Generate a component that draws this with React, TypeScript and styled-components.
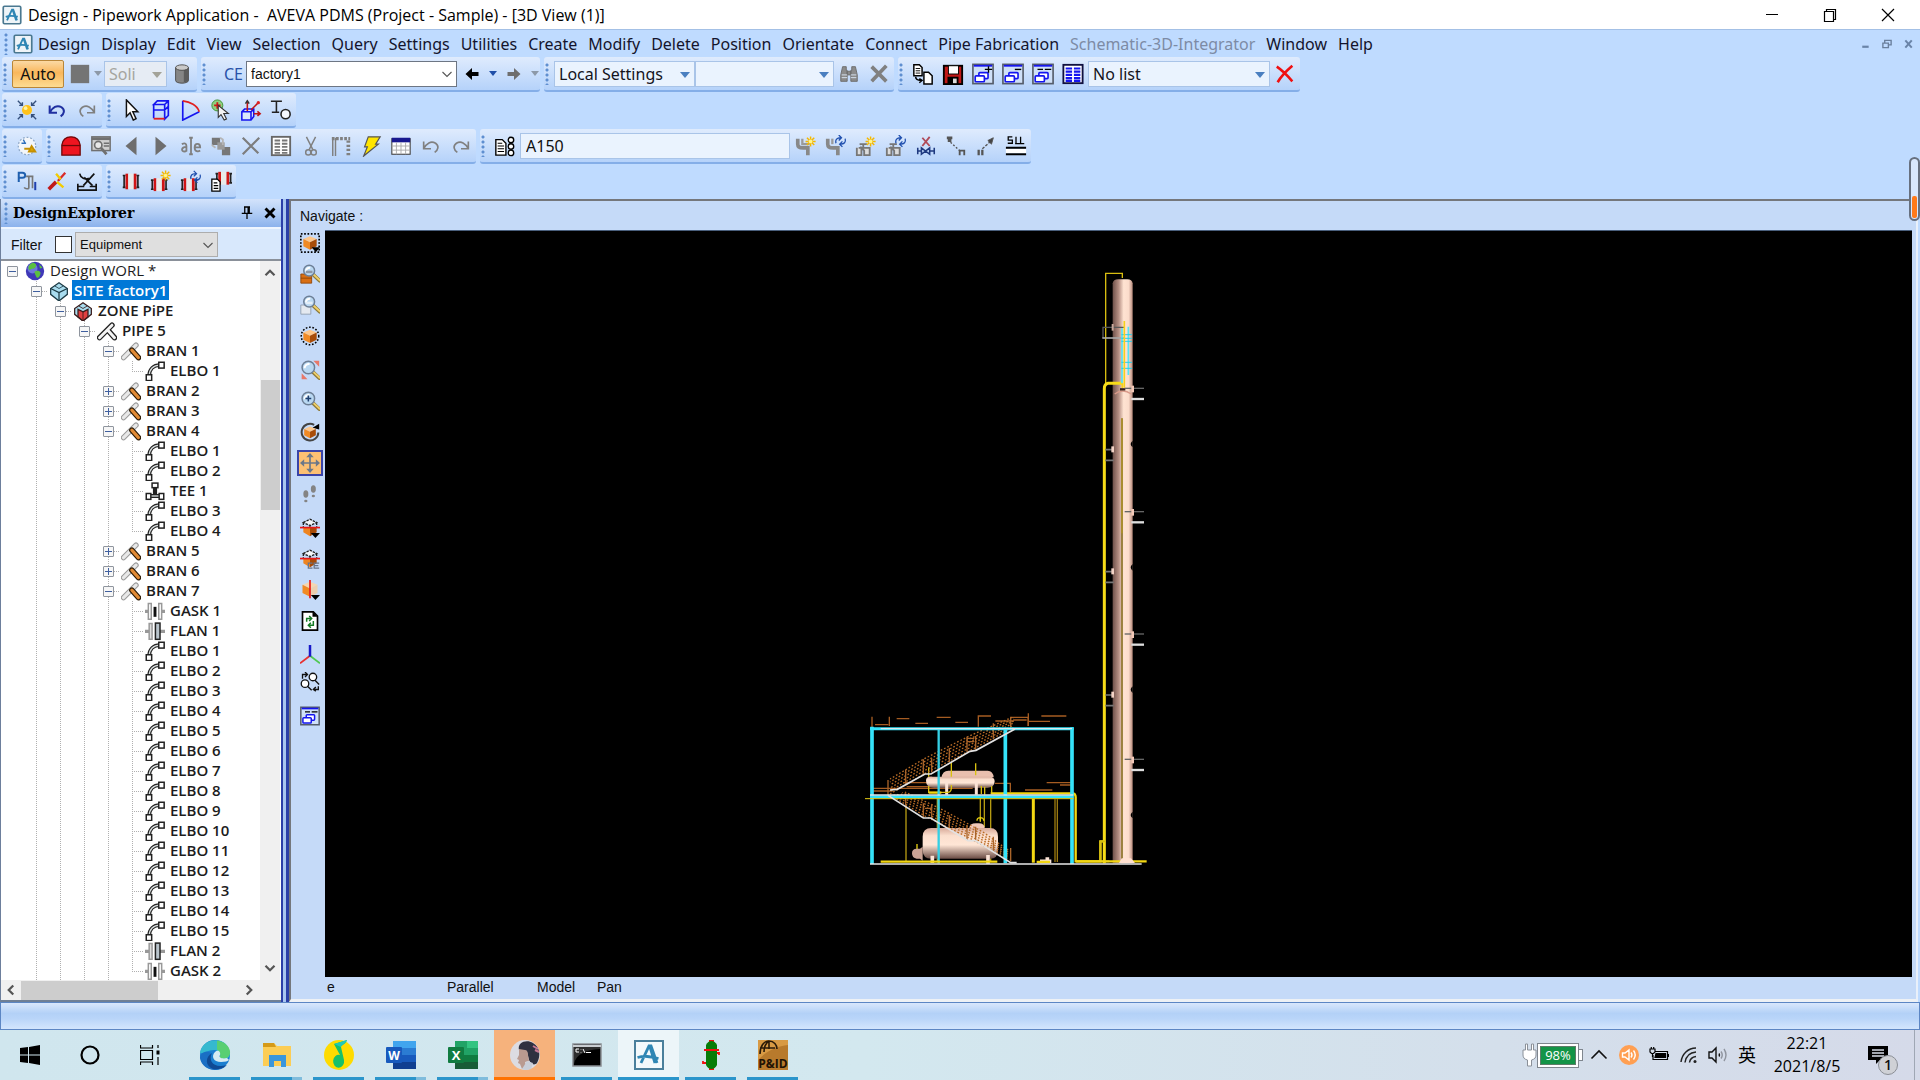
import React from "react";
import styled, { createGlobalStyle } from "styled-components";

const ui = '"Noto Sans", "Open Sans", "Noto Sans CJK SC", sans-serif';
const arial = '"Liberation Sans", Arial, sans-serif';

const GlobalStyle = createGlobalStyle`
  * { box-sizing: border-box; }
  body { margin: 0; background: #bfdbff; font-family: ${ui}; color: #101010; overflow: hidden; }
  button, select, input { font: inherit; color: inherit; margin: 0; }
  button { border: 0; background: none; padding: 0; }
  ul { list-style: none; margin: 0; padding: 0; }
`;

/* ---------- drawings ---------- */

const Svg = styled.svg<{ $size?: number }>`
  width: ${(p) => p.$size ?? 24}px;
  height: ${(p) => p.$size ?? 24}px;
  flex: none;
  display: block;
`;

const Cube = ({ x = 12, y = 12, r = 7, top = "#ffc78a", left = "#f08a24", right = "#a84c08", line = "none" }) => (
  <g stroke={line}>
    <path d={`M${x} ${y - r}l${r} ${r * 0.4}l${-r} ${r * 0.5}l${-r} ${-r * 0.5}z`} fill={top} />
    <path d={`M${x - r} ${y - r * 0.6}l${r} ${r * 0.5}v${r * 1.1}l${-r} ${-r * 0.5}z`} fill={left} />
    <path d={`M${x + r} ${y - r * 0.6}l${-r} ${r * 0.5}v${r * 1.1}l${r} ${-r * 0.5}z`} fill={right} />
  </g>
);

/* Cube whose upper half is cut away and dashed */
const ClippedCube = () => (
  <g>
    <path d="M4 11h8v11l-8 -5z" fill="#ee8420" />
    <path d="M20 11h-8v11l8 -5z" fill="#a84c08" />
    <path d="M4 5.500l8 -4l8 4l-8 3.500zM4 5.500v5M20 5.500v5M12 9v2" fill="#f4f6fa" stroke="#222" strokeWidth="1.600" strokeDasharray="3 1.200" />
    <path d="M0 11.500h24" stroke="#e81818" strokeWidth="2" />
  </g>
);

const Lens = ({ x = 9, y = 9, r = 6 }) => (
  <g>
    <path d={`M${x + r * 0.7} ${y + r * 0.7}l8 7.5`} stroke="#8d7a3a" strokeWidth="4.4" strokeLinecap="round" />
    <path d={`M${x + r * 0.8} ${y + r * 0.7}l7.5 7`} stroke="#efcf6a" strokeWidth="2.2" strokeLinecap="round" />
    <circle cx={x} cy={y} r={r} fill="#b9d8f2" stroke="#6d7f96" strokeWidth="1.8" />
    <path d={`M${x - r * 0.6} ${y + 1}a${r * 0.7} ${r * 0.7} 0 0 1 ${r * 0.8} ${-r * 0.7}`} stroke="#fff" strokeWidth="2.4" fill="none" />
  </g>
);

const Spark = ({ x = 17, y = 7 }) => (
  <g stroke="#f5b800" strokeWidth="1.6">
    <path d={`M${x} ${y - 5.5}v11M${x - 5.5} ${y}h11M${x - 4} ${y - 4}l8 8M${x + 4} ${y - 4}l-8 8`} />
    <circle cx={x} cy={y} r="2" fill="#fff58a" stroke="none" />
  </g>
);

const Cycle = ({ x = 17, y = 6 }) => (
  <g stroke="#1f4fae" strokeWidth="1.4" fill="none">
    <path d={`M${x - 5} ${y + 3}c-1 -4 1 -6 5 -6M${x - 2} ${y - 6}l3 3l-3 3`} />
    <path d={`M${x + 5} ${y - 2}c1 4 -1 6 -5 6M${x + 2} ${y + 7}l-3 -3l3 -3`} />
  </g>
);

const flangePair = (x: number, y: number, h: number) => (
  <g>
    <path d={`M${x} ${y + 2}h3M${x} ${y + h - 2}h3M${x + 1.5} ${y + 2}v${h - 4}`} stroke="#222" strokeWidth="1.8" />
    <rect x={x + 3} y={y} width="3" height={h} fill="#d01515" />
    <rect x={x + 6} y={y} width="6" height={h} fill="#e9e9e9" />
    <rect x={x + 12} y={y} width="3" height={h} fill="#d01515" />
    <path d={`M${x + 15} ${y + 2}h3M${x + 15} ${y + h - 2}h3M${x + 16.5} ${y + 2}v${h - 4}`} stroke="#222" strokeWidth="1.8" />
  </g>
);

const boxWindow = (extra: React.ReactNode) => (
  <g fill="none">
    <rect x="1" y="1.5" width="22" height="21" fill="#cfe0f8" stroke="#555d6b" strokeWidth="1.8" />
    <path d="M2 3h20" stroke="#1515f0" strokeWidth="2" />
    <rect x="7.5" y="10.5" width="10" height="6.5" rx="1" fill="#fff" stroke="#1515f0" strokeWidth="1.8" />
    <rect x="3.5" y="14" width="10" height="6.5" rx="1" fill="#fff" stroke="#1515f0" strokeWidth="1.8" />
    {extra}
  </g>
);

const icons: Record<string, React.ReactNode> = {
  logo: (
    <g>
      <rect x="1.5" y="1.5" width="21" height="21" rx="1.5" fill="#eef4f8" stroke="#4a7890" strokeWidth="2" />
      <path d="M6 18.5L12 5.5h1.5L18 18.5M12.8 6L17 18.5M4.5 14.2c4 -1.5 8 -1.5 14.5 -.2" fill="none" stroke="#2f86b4" strokeWidth="2.2" />
    </g>
  ),
  square: <rect x="2" y="2" width="20" height="20" fill="#747474" />,
  cylinder: (
    <g>
      <path d="M5 5v14c0 4 14 4 14 0V5z" fill="#858585" stroke="#4c4c4c" />
      <path d="M14 7v14c3 -.3 5 -1 5 -2V5z" fill="#5c5c5c" />
      <ellipse cx="12" cy="5" rx="7" ry="3" fill="#c9c9c9" stroke="#4c4c4c" />
    </g>
  ),
  left: <path d="M5.500 12l6.500 -6v4h6.500v4H12v4z" fill="#000" />,
  right: <path d="M18.500 12l-6.500 -6v4H5.500v4H12v4z" fill="#6e6e6e" />,
  binoc: (
    <g fill="#8b8b8b" stroke="#6b6b6b">
      <path d="M5 4h4v4h1v12H3v-7zM15 4h4l2 9v7h-7V8h1zM10 9h4v4h-4z" />
      <path d="M4 13h6M14 13h6M4 16h6M14 16h6" stroke="#dbe7f5" />
    </g>
  ),
  greyX: <path d="M4 4l16 16M20 3L4 20" stroke="#808080" strokeWidth="4" />,
  thinX: <path d="M3 3l17 17M21 3L3 21" stroke="#7d7d7d" strokeWidth="2.4" />,
  redX: <path d="M3 4c6 4 11 9 17 16M20 3C13 9 8 14 4 21" stroke="#f01010" strokeWidth="2.8" fill="none" />,
  copyDocs: (
    <g fill="#fff" stroke="#000" strokeWidth="1.6">
      <path d="M2 2h6l3 3v9H2zM13 10h5l4 4v9h-9z" />
      <path d="M4 6h5M4 8.500h5M4 11h5" strokeWidth="1" />
      <path d="M4 15c0 3 2 4 6 4M8 17l3 2l-3 2.500" fill="none" />
    </g>
  ),
  save: (
    <g>
      <rect x="2" y="3" width="20" height="20" fill="#c01818" stroke="#000" strokeWidth="2" />
      <rect x="7" y="3" width="11" height="9" fill="#fff" stroke="#000" />
      <rect x="6" y="15" width="12" height="8" fill="#000" />
      <rect x="12" y="17" width="4" height="5" fill="#ddd" />
    </g>
  ),
  winPlus: boxWindow(<path d="M14 7h8M18 3.500v7" stroke="#000" strokeWidth="1.5" />),
  winMinus: boxWindow(<path d="M14 7h7" stroke="#000" strokeWidth="1.5" />),
  winDash: boxWindow(<path d="M6 7h6M14 7h7" stroke="#000" strokeWidth="1.5" />),
  listWin: (
    <g>
      <rect x="1.500" y="2" width="21" height="20" fill="#fff" stroke="#101040" strokeWidth="2" />
      <path d="M4 6h7M4 9.500h7M4 13h7M4 16.500h7M4 19.500h7M13 6h7M13 9.500h7M13 13h7M13 16.500h7M13 19.500h7" stroke="#1515f0" strokeWidth="2.400" />
    </g>
  ),
  sun: (
    <g>
      <circle cx="12" cy="12" r="5.500" fill="#ffc21a" />
      <circle cx="10.500" cy="10" r="2" fill="#fff3a0" />
      <path d="M2 2l5 5M7 3.500V7H3.500M22 2l-5 5M17 3.500V7h3.500M2 22l5 -5M3.500 17H7v3.500M22 22l-5 -5M20.500 17H17v3.500" stroke="#35507c" strokeWidth="1.500" fill="none" />
    </g>
  ),
  undo: <path d="M4 7v8h8M4 15c3 -6 8 -9 13 -6c4 3 3 7 -1 10" stroke="#1f2fa0" strokeWidth="2.200" fill="none" />,
  redo: <path d="M20 7v8h-8M20 15c-3 -6 -8 -9 -13 -6c-4 3 -3 7 1 10" stroke="#808080" strokeWidth="1.800" fill="none" />,
  undoGrey: <path d="M4 7v8h8M4 15c3 -6 8 -9 13 -6c4 3 3 7 -1 10" stroke="#808080" strokeWidth="1.800" fill="none" />,
  pointer: <path d="M7 1v18l4 -4l3.500 8l3 -1.500l-3.500 -7.500h5.500z" fill="#fff" stroke="#111" strokeWidth="1.600" />,
  frameBox: (
    <g fill="none" stroke="#1515f0" strokeWidth="1.800">
      <path d="M4 6l4 -4h12v16l-4 4V6zM4 6v15M20 2l-4 4M4 12h12l4 -4M4 6h12" />
      <path d="M4 21.500h12" stroke="#e02020" strokeWidth="2" />
    </g>
  ),
  sector: (
    <g fill="none" strokeWidth="1.800">
      <path d="M3 2v21L21 14" stroke="#1515f0" />
      <path d="M3 2c8 1 16 5 18 12" stroke="#e02020" />
    </g>
  ),
  addPick: (
    <g>
      <circle cx="8" cy="7" r="6" fill="#8fd07f" stroke="#3a8f2e" />
      <path d="M8 3.500v7M4.500 7h7" stroke="#d01515" strokeWidth="2" />
      <path d="M9 7v13l3 -3l3.500 6l2.500 -1.200l-3 -6h5z" fill="#f4f4f4" stroke="#333" strokeWidth="1.200" />
    </g>
  ),
  axesBox: (
    <g fill="none" strokeWidth="1.700">
      <path d="M2 14l3 -3h10v8l-3 4H2z" stroke="#1515f0" fill="#dbe8fb" />
      <path d="M2 14h10v9M12 14l3 -3" stroke="#1515f0" />
      <path d="M8 13V2M12 12l8 -8M15 16h7M19 13.500l3 2.500l-3 2.500" stroke="#c01515" />
      <path d="M6 5l2 -3l2 3" stroke="#333" />
      <circle cx="20" cy="4" r="1.800" fill="#e02020" />
    </g>
  ),
  iCircle: (
    <g fill="none" stroke="#222" strokeWidth="1.700">
      <path d="M1 2.500h12M7 2.500v12M2 14.500h8" />
      <circle cx="17" cy="16.500" r="5" fill="#f4f8ff" />
    </g>
  ),
  dashWheel: (
    <g>
      <circle cx="12" cy="12" r="9.500" fill="#f3f6fa" stroke="#8fa9c8" strokeWidth="1.400" strokeDasharray="2 2" />
      <path d="M8 5l2 4M6 9h5" stroke="#2e6fbc" strokeWidth="1.500" />
      <path d="M9 15h6M17 12l4 6h-7z" fill="#e0a800" stroke="#c58f00" strokeWidth="2" />
    </g>
  ),
  redDome: (
    <g>
      <path d="M2 22V11C3 4 7 2 12 2s9 2 10 9v11z" fill="#ee1520" stroke="#6d0808" strokeWidth="1.400" />
      <path d="M2 11.500h20" stroke="#6d0808" strokeWidth="1.400" />
    </g>
  ),
  searchTable: (
    <g stroke="#707070" fill="none">
      <rect x="2" y="2" width="20" height="15" strokeWidth="1.600" fill="#cfcfcf" />
      <path d="M2 4h20" strokeWidth="3" />
      <path d="M15 9h6M15 12h6" strokeWidth="1.500" />
      <circle cx="9" cy="11" r="4" fill="#e8e8e8" strokeWidth="1.800" />
      <path d="M12 14l6 7" strokeWidth="3" />
    </g>
  ),
  triLeft: <path d="M18 2v20L6 12z" fill="#6e6e6e" />,
  triRight: <path d="M6 2v20L18 12z" fill="#6e6e6e" />,
  rename: (
    <g fill="none" stroke="#808080" strokeWidth="2">
      <path d="M2 10c4 -2 5 0 5 2v6M7 13c-6 0 -6 5 -2 5c2 0 2 -2 2 -2M12 4v16M10 3h4M10 21h4M16 13.500h6c0 -5 -6 -5 -6 0c0 5 4 5 6 3.500" />
    </g>
  ),
  blocks: (
    <g>
      <path d="M2 3h9v8H2zM13 13h9v9h-9z" fill="#777" />
      <path d="M8 8h8v8H8z" fill="#9b9b9b" />
      <path d="M11 3l3 2v6M2 11l4 3" stroke="#b5b5b5" strokeWidth="2" fill="none" />
    </g>
  ),
  listGrey: (
    <g>
      <rect x="2" y="2" width="20" height="20" fill="#fff" stroke="#666" strokeWidth="2" />
      <path d="M5 6h6M5 9.500h6M5 13h6M5 16.500h6M5 19.500h6M13 6h6M13 9.500h6M13 13h6M13 16.500h6M13 19.500h6" stroke="#777" strokeWidth="2" />
    </g>
  ),
  cut: (
    <g fill="none" stroke="#808080" strokeWidth="1.600">
      <path d="M7 2l7 14M17 2l-7 14" />
      <circle cx="9" cy="19" r="2.800" />
      <circle cx="15" cy="19" r="2.800" />
    </g>
  ),
  beam: (
    <g stroke="#808080" fill="none">
      <path d="M3 3v20M6 3v20" strokeWidth="1.600" />
      <path d="M2 4h20" strokeWidth="3.500" strokeDasharray="3 1.500" />
      <path d="M20 6v16" strokeWidth="4" strokeDasharray="2.500 2" />
    </g>
  ),
  bolt: <path d="M9 2h13l-5 8h3L4 23l4 -10H5z" fill="#ffe500" stroke="#555" strokeWidth="1.300" />,
  calendar: (
    <g>
      <rect x="2" y="4" width="20" height="17" fill="#fff" stroke="#444" strokeWidth="1.200" />
      <rect x="2" y="3" width="20" height="5" fill="#18188f" />
      <path d="M7 8v13M12 8v13M17 8v13M2 12h20M2 16.500h20" stroke="#aaa" />
    </g>
  ),
  specDoc: (
    <g stroke="#000" strokeWidth="1.500" fill="#fff">
      <path d="M2 5h7l4 4v13H2z" />
      <path d="M4 9h5M4 12h7M4 15h7M4 18h7" strokeWidth="1.200" />
      <circle cx="18.500" cy="5.500" r="3" />
      <circle cx="18.500" cy="12.500" r="3" />
      <circle cx="18.500" cy="19.500" r="3" />
    </g>
  ),
  pipeNew: (
    <g>
      <path d="M3 4v6c0 3 3 4 6 4h5v8" stroke="#888" strokeWidth="4" fill="none" />
      <path d="M8 4v6h8" stroke="#9a9a9a" strokeWidth="2.500" fill="none" />
      <Spark />
    </g>
  ),
  pipeCycle: (
    <g>
      <path d="M3 4v6c0 3 3 4 6 4h5v8" stroke="#888" strokeWidth="4" fill="none" />
      <path d="M8 4v6" stroke="#9a9a9a" strokeWidth="2.500" fill="none" />
      <Cycle />
    </g>
  ),
  valveNew: (
    <g>
      <path d="M2 14v8h5v-8l3 3v5h6v-8M4 14h13M9 14v-4M5 10h8" stroke="#777" strokeWidth="2" fill="#ddd" />
      <Spark />
    </g>
  ),
  valveCycle: (
    <g>
      <path d="M2 14v8h5v-8l3 3v5h6v-8M4 14h13M9 14v-4M5 10h8" stroke="#777" strokeWidth="2" fill="#ddd" />
      <Cycle />
    </g>
  ),
  valveX: (
    <g fill="none">
      <path d="M3 14v7M3 17.500h4M7 14v7l9 -7v7zM16 17.500h5M21 14v7" stroke="#1f3a80" strokeWidth="1.700" />
      <path d="M8 3l8 9M16 2l-8 10" stroke="#b04a58" strokeWidth="2" />
    </g>
  ),
  dotDown: (
    <g fill="none" stroke="#555">
      <path d="M2 3h6M3 6h4" strokeWidth="3" />
      <path d="M6 8l10 9" strokeWidth="1.500" strokeDasharray="2 2" />
      <path d="M16 22v-5h5v5" strokeWidth="2" />
    </g>
  ),
  dotUp: (
    <g fill="none" stroke="#555">
      <path d="M4 22v-6M8 22v-6" strokeWidth="2.500" />
      <path d="M8 15l9 -8" strokeWidth="1.500" strokeDasharray="3 1.500" />
      <path d="M20 3l-6 3l4 4z" fill="#444" />
    </g>
  ),
  level: (
    <g fill="none" stroke="#000">
      <path d="M8 2H3.500v3.500H8V9H3M12 2v8M17 2v8M11 9.500h10" strokeWidth="1.400" />
      <path d="M1 14h22M1 21h22" strokeWidth="2.200" />
      <path d="M1 17.500h22" stroke="#fff" strokeWidth="4.400" />
    </g>
  ),
  pBend: (
    <g fill="none">
      <path d="M3 13V3h4c4 0 4 5.500 0 5.500H3" stroke="#1f5fae" strokeWidth="2.200" />
      <path d="M11 7h8M14 7v12c0 2 -4 2 -5 0M18 7v13" stroke="#777" strokeWidth="1.800" />
      <path d="M21 13v9" stroke="#1f3fae" strokeWidth="2.200" />
    </g>
  ),
  redDart: (
    <g>
      <path d="M3 21l8 -8" stroke="#c01818" strokeWidth="4" fill="none" />
      <path d="M13 12l8 -9" stroke="#d82a2a" strokeWidth="2.500" />
      <path d="M11 4l5 6M12 13l7 6" stroke="#f2cc00" strokeWidth="2.500" />
    </g>
  ),
  trim: (
    <g fill="none" stroke="#111" strokeWidth="1.800">
      <path d="M4 4c1 5 6 7 10 5M20 4l-12 13M9 8l9 9" />
      <path d="M2 15v7h20v-7M2 18h7M22 18h-7" />
    </g>
  ),
  flange: flangePair(3, 4, 17),
  flangeNew: (
    <g>
      {flangePair(1, 9, 14)}
      <Spark x={17} y={6} />
    </g>
  ),
  flangeCycle: (
    <g>
      {flangePair(1, 9, 14)}
      <Cycle x={17} y={7} />
    </g>
  ),
  flangeDoc: (
    <g>
      {flangePair(6, 2, 14)}
      <path d="M2 10h6l3 3v10H2zM4 14h4M4 17h5M4 20h5" stroke="#000" strokeWidth="1.400" fill="#fff" />
    </g>
  ),
  /* view bar */
  cubeSelect: (
    <g>
      <rect x="1" y="1" width="22" height="22" fill="none" stroke="#000" strokeWidth="2" strokeDasharray="2 2" />
      <Cube y={12} r={8} />
      <path d="M14 17h10l-5 6z" fill="#000" />
    </g>
  ),
  cubeLens: (
    <g>
      <path d="M1 12h13v11H1z" fill="#d86f14" stroke="#8c4205" />
      <path d="M1 17h13" stroke="#8c4205" />
      <Lens x={11} y={8} r={6.500} />
      <path d="M7 8h8v3H7z" fill="#8d97a5" />
    </g>
  ),
  pageLens: (
    <g>
      <path d="M1 12h12v11H1z" fill="#e4e9f0" stroke="#8c99ab" />
      <Lens x={11} y={8} r={6.500} />
      <path d="M7 8h8v3H7z" fill="#e4eef8" />
    </g>
  ),
  cubeRound: (
    <g>
      <circle cx="12" cy="12" r="10.500" fill="none" stroke="#000" strokeWidth="1.800" strokeDasharray="2 2" />
      <Cube y={12.500} r={8} />
    </g>
  ),
  lensRed: (
    <g>
      <path d="M16 1h7v7zM2 16v7h7z" fill="#e87868" />
      <Lens x={10} y={9} r={7.500} />
    </g>
  ),
  lensPlus: (
    <g>
      <Lens x={10} y={9} r={7.500} />
      <path d="M10 5.500v7M6.500 9h7" stroke="#1f3f70" strokeWidth="1.800" />
    </g>
  ),
  cubeRotate: (
    <g>
      <path d="M17 3.500a10 10 0 1 0 5 9" fill="none" stroke="#444" strokeWidth="2.400" />
      <path d="M15 7l8 -5v7z" fill="#000" />
      <Cube y={12.500} r={7} />
    </g>
  ),
  move: (
    <g stroke="#6b7789" fill="#6b7789">
      <path d="M12 3v18M3 12h18" strokeWidth="2" />
      <path d="M12 0l4.500 5h-9zM12 24l4.500 -5h-9zM0 12l5 -4.500v9zM24 12l-5 -4.500v9z" stroke="none" />
    </g>
  ),
  feet: (
    <g fill="#848484">
      <ellipse cx="7" cy="12" rx="3" ry="4.500" />
      <ellipse cx="7" cy="20.500" rx="2" ry="1.500" />
      <ellipse cx="16" cy="6" rx="3" ry="4.500" />
      <ellipse cx="16" cy="14.500" rx="2" ry="1.500" />
    </g>
  ),
  clipCube: (
    <g>
      <ClippedCube />
      <path d="M13 18h11l-5.500 6z" fill="#000" />
    </g>
  ),
  clipCe: (
    <g>
      <ClippedCube />
      <path d="M15 17h-5v6h5M23 17h-6v6h6M17 20h5" stroke="#69758a" strokeWidth="1.500" fill="none" />
    </g>
  ),
  cubeCut: (
    <g>
      <Cube y={11} r={9} top="#f6d6b0" right="#eccfae" />
      <path d="M12 0v22" stroke="#e81818" strokeWidth="2" />
      <path d="M13 18h11l-5.500 6z" fill="#000" />
    </g>
  ),
  refresh: (
    <g>
      <path d="M3 1h13l5 5v17H3z" fill="#fff" stroke="#000" strokeWidth="2" />
      <path d="M15 1v6h6z" fill="#000" />
      <path d="M8 13v-4h5M11 6l3 3l-3 3M16 12v5h-5M13 20l-3 -3l3 -3" stroke="#157a25" strokeWidth="1.800" fill="none" />
    </g>
  ),
  axes: (
    <g strokeWidth="2.2">
      <path d="M12 13L0 22" stroke="#e83030" />
      <path d="M12 13l12 9" stroke="#50c850" />
      <path d="M12 14V0" stroke="#1818c8" strokeWidth="3" />
    </g>
  ),
  swapLens: (
    <g fill="none" stroke="#111" strokeWidth="1.600">
      <circle cx="15.500" cy="6" r="4.500" fill="#fff" />
      <circle cx="6" cy="14" r="4.500" fill="#fff" />
      <path d="M18 10l5 5M9 17l5 5M3 8V3h5M6 0l3 3l-3 3M22 17v4h-5M19 18l-3 3l3 2" />
    </g>
  ),
  /* tree */
  world: (
    <g>
      <circle cx="12" cy="12" r="11" fill="#3f38b8" />
      <circle cx="9" cy="9" r="6" fill="#6c78dc" />
      <path d="M9 2c4 0 6 3 3 6s-4 0 -5 2s-3 0 -3 -2s2 -5 5 -6zM13 12c4 -1 7 1 5 5s-4 4 -5 1s-3 -5 0 -6zM17 4l4 4l-3 1z" fill="#5ac040" />
    </g>
  ),
  site: (
    <g stroke="#1c3a44" strokeWidth="1.500">
      <path d="M12 2l10 7v7l-10 8l-10 -8V9z" fill="#a9dcee" />
      <path d="M2 9l10 5l10 -5M12 14v9" fill="none" />
      <path d="M7 6l5 3l5 -3" fill="none" strokeWidth="1" />
    </g>
  ),
  zone: (
    <g stroke="#3a1c1c" strokeWidth="1.500">
      <path d="M12 2l10 7v7l-10 8l-10 -8V9z" fill="#a9dcee" />
      <path d="M12 13l6 -3v9l-6 5l-6 -5v-9z" fill="#e04040" />
      <path d="M7 6l5 3l5 -3M12 13v10" fill="none" strokeWidth="1" />
    </g>
  ),
  pipe: (
    <g>
      <path d="M3 20L18 5" stroke="#222" strokeWidth="6.500" strokeLinecap="round" />
      <path d="M13 11l8 9" stroke="#222" strokeWidth="6.500" strokeLinecap="round" />
      <path d="M3 20L18 5M13 11l8 9" stroke="#f4f4f4" strokeWidth="3.500" strokeLinecap="round" />
    </g>
  ),
  branch: (
    <g strokeLinecap="round">
      <path d="M3 20L18 5" stroke="#9a9a9a" strokeWidth="6.500" />
      <path d="M3 20L18 5" stroke="#e8e8e8" strokeWidth="4" />
      <path d="M13 11l8 9" stroke="#2a1a06" strokeWidth="6.500" />
      <path d="M13 11l8 9" stroke="#e08a35" strokeWidth="3.800" />
    </g>
  ),
  elbow: (
    <g fill="none">
      <path d="M5 18C5 10 10 5 18 5" stroke="#222" strokeWidth="4.500" />
      <path d="M5 18C5 10 10 5 18 5" stroke="#d9dede" strokeWidth="1.600" />
      <rect x="16.500" y="1.500" width="6.500" height="7" fill="#fff" stroke="#222" strokeWidth="1.800" />
      <rect x="1.500" y="16.500" width="6.500" height="7" fill="#fff" stroke="#222" strokeWidth="1.800" />
    </g>
  ),
  tee: (
    <g fill="#fff" stroke="#222" strokeWidth="1.800">
      <path d="M5 18h14M12 17V8" strokeWidth="5" />
      <path d="M6 18h12" stroke="#d9dede" strokeWidth="1.600" />
      <rect x="8.500" y="2.500" width="7" height="5.500" />
      <rect x="1.500" y="15" width="5.500" height="7" />
      <rect x="17" y="15" width="5.500" height="7" />
    </g>
  ),
  gask: (
    <g fill="none">
      <path d="M0 12.500h4M20 12.500h4" stroke="#999" strokeWidth="4" />
      <path d="M4 3h3.500v19H4zM20 3h-3.500v19H20z" stroke="#999" strokeWidth="1.800" />
      <path d="M12 7v12" stroke="#111" strokeWidth="3.500" />
    </g>
  ),
  flan: (
    <g fill="none">
      <path d="M0 12.500h5M18 12.500h6" stroke="#999" strokeWidth="4" />
      <path d="M5 3h3.500v19H5z" stroke="#999" strokeWidth="1.800" fill="#ddd" />
      <rect x="12.500" y="2.500" width="5.500" height="19.500" fill="#b9c4cc" stroke="#222" strokeWidth="1.800" />
    </g>
  ),
  /* window frame */
  winMin: <path d="M6 11.500h12" stroke="#000" />,
  winRestore: <path d="M6.500 8.500h9v10h-9zM8.500 8.500v-2h9v10h-2" stroke="#000" fill="none" strokeWidth="1.200" />,
  winClose: <path d="M6 6l12 12M18 6L6 18" stroke="#000" strokeWidth="1.200" />,
  mdiMin: <path d="M9 15h7" stroke="#6a84a8" strokeWidth="2.400" />,
  mdiRestore: <path d="M7.500 11h6v5h-6zM9.500 11V8h7v5h-3" stroke="#6a7f9c" strokeWidth="1.500" fill="none" />,
  mdiClose: <path d="M8 8l7 8M15 8l-7 8" stroke="#6a84a8" strokeWidth="2.200" />,
  pin: <path d="M8 4h8M9 4v8M15 4v8M13.500 4v8M5 12.500h14M12 13v7" stroke="#000" strokeWidth="1.700" />,
  boldX: <path d="M6 6l12 12M18 6L6 18" stroke="#000" strokeWidth="3.800" />,
  chevUp: <path d="M6 15l6 -6l6 6" stroke="#555" strokeWidth="3" fill="none" />,
  chevDown: <path d="M6 9l6 6l6 -6" stroke="#555" strokeWidth="3" fill="none" />,
  chevThin: <path d="M3 8l9 9l9 -9" stroke="#555" strokeWidth="2.200" fill="none" />,
  chevLeft: <path d="M15 6l-6 6l6 6" stroke="#555" strokeWidth="3" fill="none" />,
  chevRight: <path d="M9 6l6 6l-6 6" stroke="#555" strokeWidth="3" fill="none" />,
};

const Icon = ({ name, size }: { name: string; size?: number }) => (
  <Svg $size={size} viewBox="0 0 24 24" fill="none" aria-hidden="true">
    {icons[name]}
  </Svg>
);

/* ---------- shell ---------- */

const Shell = styled.div`
  position: relative;
  height: 100vh;
  display: flex;
  flex-direction: column;
`;

const TitleBar = styled.header`
  height: 29px;
  flex: none;
  display: flex;
  align-items: center;
  background: #fff;
  padding-left: 2px;
  gap: 6px;
  h1 {
    flex: 1;
    margin: 0;
    font: 400 16px/28px "Open Sans", "Noto Sans", sans-serif;
    color: #000;
    white-space: pre;
  }
`;

const ButtonSet = styled.div`
  display: flex;
  padding-right: 3px;
`;

const WindowButton = styled.button`
  width: 58px;
  height: 28px;
  display: grid;
  place-items: center;
`;

const MenuBar = styled.nav`
  height: 28px;
  flex: none;
  display: flex;
  align-items: center;
  padding-left: 3px;
  border-top: 1px solid #a3c0e6;
`;

const Grip = styled.span`
  width: 10px;
  height: 22px;
  flex: none;
  background: radial-gradient(circle at 3px 2px, #5f8fd0 1px, transparent 2px) 0 0 / 10px 5px;
`;

const MenuItem = styled.button`
  font-size: 16px;
  line-height: 26px;
  padding: 0 6px 0 5px;
  white-space: nowrap;
  color: #14142c;
  &:disabled { color: #7d8ba5; }
`;

const Fill = styled.div`
  flex: 1;
`;

const MdiButton = styled.button`
  width: 22px;
  display: grid;
  place-items: center;
`;

const Bars = styled.div`
  flex: none;
  display: flex;
  flex-direction: column;
  gap: 1px;
  padding-left: 2px;
`;

const BarRow = styled.div`
  display: flex;
  gap: 4px;
  height: 35px;
  &:last-child { height: 34px; }
`;

const BarGroup = styled.div`
  display: flex;
  align-items: center;
  border-bottom: 2px solid #84aee8;
  border-radius: 3px;
  background: linear-gradient(#dfebfd, #cadffc 50%, #b5d2fa);
`;

const ToolButton = styled.button<{ $w?: number }>`
  width: ${(p) => p.$w ?? 30}px;
  height: 28px;
  flex: none;
  display: grid;
  place-items: center;
`;

const AutoButton = styled.button`
  width: 52px;
  height: 28px;
  margin-right: 4px;
  border: 1px solid #b98638;
  border-radius: 2px;
  background: linear-gradient(#fbd9a4, #f9b75c 45%, #fddc92);
  font-size: 16px;
  line-height: 24px;
`;

const DropMark = styled.button<{ $color?: string; $w?: number }>`
  width: ${(p) => p.$w ?? 12}px;
  height: 28px;
  display: grid;
  place-items: center;
  &::after {
    content: "";
    border: 4px solid transparent;
    border-top: 5px solid ${(p) => p.$color ?? "#8d99a8"};
    border-bottom: 0;
  }
`;

const SelectWrap = styled.div<{ $w: number; $arrow?: string; $off?: boolean }>`
  position: relative;
  width: ${(p) => p.$w}px;
  flex: none;
  select {
    display: block;
    width: 100%;
    height: 26px;
    padding: 0 4px;
    appearance: none;
    border: 1px solid #a9c4e8;
    border-radius: 0;
    background: ${(p) => (p.$off ? "#e6ecf4" : "#eaf3fe")};
    font-size: 16px;
    line-height: 24px;
    color: ${(p) => (p.$off ? "#a5a5a0" : "#14141c")};
    opacity: 1;
  }
  &::after {
    content: "";
    position: absolute;
    right: 5px;
    top: 11px;
    border: 5px solid transparent;
    border-top: 6px solid ${(p) => p.$arrow ?? "#4a7fc0"};
    border-bottom: 0;
    pointer-events: none;
  }
`;

const CeLabel = styled.label`
  width: 35px;
  padding-left: 13px;
  font-size: 16px;
  color: #2a52a8;
`;

const ElementBox = styled.div<{ $w: number; $h: number; $bg: string; $line: string; $size: number }>`
  position: relative;
  width: ${(p) => p.$w}px;
  flex: none;
  select {
    display: block;
    width: 100%;
    height: ${(p) => p.$h}px;
    appearance: none;
    padding: 0 4px;
    border: 1px solid ${(p) => p.$line};
    border-radius: 0;
    background: ${(p) => p.$bg};
    font: ${(p) => p.$size}px/22px ${arial};
  }
  svg {
    position: absolute;
    right: 4px;
    top: 7px;
    pointer-events: none;
  }
`;

const SpecInput = styled.input`
  width: 270px;
  height: 26px;
  margin-right: 1px;
  padding: 0 5px;
  border: 1px solid #a9c4e8;
  background: #eaf3fe;
  font-size: 16px;
  line-height: 24px;
`;

const Main = styled.main`
  flex: 1;
  min-height: 0;
  display: flex;
`;

/* ---------- explorer ---------- */

const Explorer = styled.aside`
  width: 281px;
  flex: none;
  display: flex;
  flex-direction: column;
  border-left: 1px solid #6d7f9c;
  border-bottom: 2px solid #6f7f95;
  background: #d8e8fc;
`;

const ExplorerHead = styled.div`
  height: 30px;
  flex: none;
  display: flex;
  align-items: center;
  padding-left: 2px;
  background: linear-gradient(#d3e3fb, #b1cdf5 50%, #8cb2ec);
  border-bottom: 2px solid #eef5ff;
  h2 {
    flex: 1;
    margin: 0;
    font: 700 14px/26px "DejaVu Serif", "Liberation Serif", serif;
    color: #000;
  }
`;

const HeadButton = styled.button`
  width: 23px;
  display: grid;
  place-items: center;
`;

const FilterRow = styled.div`
  height: 32px;
  flex: none;
  display: flex;
  align-items: center;
  padding: 1px 0 0 10px;
  font: 14px/20px ${arial};
  border-bottom: 2px solid #8a9099;
  label { width: 44px; }
  input {
    appearance: none;
    width: 17px;
    height: 17px;
    border: 1px solid #333;
    background: #fff;
    margin-right: 3px;
  }
`;

const TreeArea = styled.div`
  flex: 1;
  min-height: 0;
  display: flex;
  background: #fff;
`;

const Tree = styled.ul`
  flex: 1;
  overflow: hidden;
`;

const Row = styled.li`
  height: 20px;
  display: flex;
  align-items: center;
`;

const dotted = "repeating-linear-gradient(#b0b0b0 0 1px, transparent 1px 2px)";
const dottedH = "repeating-linear-gradient(90deg, #b0b0b0 0 1px, transparent 1px 2px)";

const Guide = styled.span<{ $kind: "none" | "line" | "tee" | "end" }>`
  width: 24px;
  height: 20px;
  flex: none;
  display: grid;
  place-items: center;
  background-repeat: no-repeat;
  background-image: ${(p) =>
    p.$kind === "none" ? "none" : p.$kind === "line" ? dotted : `${dotted}, ${dottedH}`};
  background-position: 11px 0, 11px 10px;
  background-size: ${(p) => (p.$kind === "end" ? "1px 10px, 12px 1px" : "1px 20px, 12px 1px")};
`;

const Expander = styled.button`
  width: 11px;
  height: 11px;
  margin-right: 1px;
  border: 1px solid #8f959e;
  border-radius: 1px;
  background: linear-gradient(#3f5f9f, #3f5f9f) center / 7px 1px no-repeat, #f6f6f6;
  &[aria-expanded="false"] {
    background: linear-gradient(#3f5f9f, #3f5f9f) center / 7px 1px no-repeat,
      linear-gradient(#3f5f9f, #3f5f9f) center / 1px 7px no-repeat, #f6f6f6;
  }
`;

const NodeText = styled.span<{ $selected?: boolean; $plain?: boolean }>`
  margin: 0 0 2px 3px;
  padding: 0 2px;
  font: ${(p) => (p.$plain ? 400 : 600)} 15px/20px "Open Sans", "Noto Sans", sans-serif;
  white-space: pre;
  color: ${(p) => (p.$selected ? "#fff" : "#1c1c1c")};
  background: ${(p) => (p.$selected ? "#0078d7" : "transparent")};
`;

const ScrollV = styled.div`
  width: 20px;
  flex: none;
  display: flex;
  flex-direction: column;
  align-items: center;
  background: #f0f0f0;
  padding: 2px 0;
  margin-right: 1px;
`;

const ThumbV = styled.div`
  width: 19px;
  height: 130px;
  background: #cdcdcd;
  margin: 97px 0 auto;
`;

const ScrollH = styled.div`
  height: 20px;
  flex: none;
  display: flex;
  align-items: center;
  background: #f0f0f0;
  padding-right: 22px;
`;

const ThumbH = styled.div`
  width: 137px;
  height: 19px;
  background: #cdcdcd;
  margin-right: auto;
`;

const ScrollButton = styled.button`
  width: 20px;
  height: 20px;
  display: grid;
  place-items: center;
`;

const Splitter = styled.div`
  width: 8px;
  flex: none;
  border: solid #2b3fa8;
  border-width: 0 3px 0 2px;
  background: #a9c6f0;
`;

/* ---------- view ---------- */

const View = styled.section`
  flex: 1;
  min-width: 0;
  display: flex;
  flex-direction: column;
  margin-right: 2px;
  border: 2px solid #75777c;
  border-right-color: #e9f0fa;
  border-bottom: 3px solid #eef1f5;
  background: #c5daf8;
  font: 14px/20px ${arial};
`;

const Navigate = styled.div`
  height: 29px;
  padding: 5px 9px;
`;

const ViewBody = styled.div`
  flex: 1;
  min-height: 0;
  display: flex;
  padding-right: 4px;
`;

const ViewTools = styled.div`
  width: 34px;
  flex: none;
  display: flex;
  flex-direction: column;
  align-items: center;
  padding-left: 4px;
`;

const ViewTool = styled.button<{ $on?: boolean; $gap: number }>`
  width: 26px;
  height: 26px;
  flex: none;
  margin-bottom: ${(p) => p.$gap}px;
  display: grid;
  place-items: center;
  border: ${(p) => (p.$on ? "2px solid #3a44a8" : "0")};
  background: ${(p) => (p.$on ? "#fcc073" : "none")};
`;

const Canvas = styled.div`
  flex: 1;
  min-width: 0;
  background: #000;
  border-top: 1px solid #4a5f7c;
  svg { width: 100%; height: 100%; display: block; }
`;

const ViewStatus = styled.div`
  height: 22px;
  flex: none;
  display: flex;
  padding: 0 0 2px 36px;
  font-size: 14px;
  span:nth-child(1) { width: 120px; }
  span:nth-child(2) { width: 90px; }
  span:nth-child(3) { width: 60px; }
`;

const StatusBar = styled.footer`
  height: 28px;
  flex: none;
  border: 1px solid #5c86c4;
  background: linear-gradient(#d9e7fc, #b3d1f7 40%, #b9d5f9 60%, #d3e5fd);
`;

const EdgeMarker = styled.div`
  position: absolute;
  right: 0;
  top: 157px;
  width: 11px;
  height: 64px;
  padding: 37px 1px 1px;
  border: 2px solid #67707f;
  border-radius: 6px;
  background: #d9e8fd;
  &::after {
    content: "";
    display: block;
    height: 22px;
    border-radius: 2px;
    background: #ff7a1a;
  }
`;

/* ---------- taskbar ---------- */

const Taskbar = styled.footer`
  height: 50px;
  flex: none;
  display: flex;
  background: linear-gradient(90deg, #d0e6ee, #d3e8ef 45%, #d4dfeb 78%, #d5dae9);
`;

const StartArea = styled.div`
  display: flex;
  width: 184px;
  button { width: 60px; display: grid; place-items: center; }
`;

const Task = styled.button<{ $state: "open" | "multi" | "current" | "alert" }>`
  width: 61px;
  margin-right: 1px;
  position: relative;
  display: grid;
  place-items: center;
  background: ${(p) => (p.$state === "alert" ? "#f6b27c" : p.$state === "current" ? "#ecf5f9" : "none")};
  &::after {
    content: "";
    position: absolute;
    bottom: 0;
    left: ${(p) => (p.$state === "alert" || p.$state === "current" ? 0 : 5)}px;
    right: ${(p) => (p.$state === "alert" || p.$state === "current" ? 0 : 5)}px;
    height: 3px;
    background: ${(p) =>
      p.$state === "alert"
        ? "#ff7200"
        : p.$state === "multi"
        ? "linear-gradient(90deg, #2b95cb 80%, #7fbcdc 80%)"
        : "#2b95cb"};
  }
`;

const Tray = styled.div`
  margin-left: auto;
  display: flex;
  align-items: center;
`;

const TrayButton = styled.button<{ $w: number }>`
  width: ${(p) => p.$w}px;
  height: 48px;
  display: grid;
  place-items: center;
  font-size: 18px;
  line-height: 24px;
  color: #000;
`;

const Battery = styled.div`
  display: flex;
  align-items: center;
  gap: 1px;
  margin-right: 1px;
`;

const Plug = styled.svg`
  width: 15px;
  height: 24px;
  display: block;
`;

const Charge = styled.span`
  width: 40px;
  height: 23px;
  border: 2px solid #fff;
  outline: 1px solid #7f868e;
  box-shadow: inset 0 0 0 1px #5d7c68;
  background: #149447;
  color: #fff;
  font: 13px/18px "Open Sans", sans-serif;
  text-align: center;
`;

const Terminal = styled.span`
  width: 4px;
  height: 12px;
  border: 1px solid #7f868e;
  border-left: 0;
  background: #fff;
`;

const Clock = styled.button`
  width: 90px;
  font: 16px/23px "Open Sans", "Noto Sans", sans-serif;
  text-align: center;
  color: #000;
`;

const Notice = styled.button`
  position: relative;
  width: 62px;
  height: 48px;
  display: grid;
  place-items: center;
  padding-right: 10px;
  span {
    position: absolute;
    left: 26px;
    top: 24px;
    width: 20px;
    height: 20px;
    border: 1px solid #8b8f96;
    border-radius: 50%;
    background: #cfd1d6;
    font: 600 14px/18px "Open Sans", sans-serif;
  }
`;

const ShowDesktop = styled.button`
  width: 6px;
  height: 50px;
  border-left: 1px solid #9fa7b4;
`;

/* ---------- data ---------- */

const menus = [
  "Design", "Display", "Edit", "View", "Selection", "Query", "Settings", "Utilities", "Create", "Modify",
  "Delete", "Position", "Orientate", "Connect", "Pipe Fabrication", "Schematic-3D-Integrator", "Window", "Help",
];

type TreeNode = { text: string; icon: string; level: number; open?: boolean; last?: boolean };

const leaf = (text: string, icon: string, last = false): TreeNode => ({ text, icon, level: 5, last });
const bran = (n: number, open: boolean): TreeNode => ({ text: `BRAN ${n}`, icon: "branch", level: 4, open });

const nodes: TreeNode[] = [
  { text: "Design WORL *", icon: "world", level: 0, open: true },
  { text: "SITE factory1", icon: "site", level: 1, open: true },
  { text: "ZONE PiPE", icon: "zone", level: 2, open: true },
  { text: "PIPE 5", icon: "pipe", level: 3, open: true },
  bran(1, true),
  leaf("ELBO 1", "elbow", true),
  bran(2, false),
  bran(3, false),
  bran(4, true),
  leaf("ELBO 1", "elbow"),
  leaf("ELBO 2", "elbow"),
  leaf("TEE 1", "tee"),
  leaf("ELBO 3", "elbow"),
  leaf("ELBO 4", "elbow", true),
  bran(5, false),
  bran(6, false),
  bran(7, true),
  leaf("GASK 1", "gask"),
  leaf("FLAN 1", "flan"),
  ...Array.from({ length: 15 }, (_, i) => leaf(`ELBO ${i + 1}`, "elbow")),
  leaf("FLAN 2", "flan"),
  leaf("GASK 2", "gask", true),
];

const viewTools = [
  "cubeSelect", "cubeLens", "pageLens", "cubeRound", "lensRed", "lensPlus", "cubeRotate", "move",
  "feet", "clipCube", "clipCe", "cubeCut", "refresh", "axes", "swapLens", "winDash",
];

/* Space below the tools that end a set; the others have 5px */
const gapAfter: Record<string, number> = { cubeRound: 8, feet: 8, refresh: 8, axes: 1, swapLens: 8 };

const Tools = ({ names }: { names: string[] }) => (
  <>
    {names.map((n) => (
      <ToolButton key={n} aria-label={n}>
        <Icon name={n} size={22} />
      </ToolButton>
    ))}
  </>
);

const TreeRow = ({ node }: { node: TreeNode }) => (
  <Row role="treeitem" aria-level={node.level + 1}>
    {Array.from({ length: node.level }, (_, i) => (
      <Guide key={i} $kind={i === 0 ? "none" : "line"} />
    ))}
    {node.open === undefined ? (
      <Guide $kind={node.last ? "end" : "tee"} />
    ) : (
      <Guide $kind={node.level === 0 ? "none" : "tee"}>
        <Expander aria-expanded={node.open} aria-label={node.text} />
      </Guide>
    )}
    <Icon name={node.icon} size={20} />
    <NodeText $selected={node.icon === "site"} $plain={node.level === 0}>
      {node.text}
    </NodeText>
  </Row>
);

/* Structure, vessels and column shown in the 3D view */
const Model = () => {
  const up = [0, 9, 18, 27, 36, 45];
  return (
    <svg viewBox="325 231 1587 746" preserveAspectRatio="xMidYMid meet" role="img" aria-label="3D model">
      <defs>
        <linearGradient id="column">
          <stop offset="0" stopColor="#6f514a" />
          <stop offset=".3" stopColor="#b58f83" />
          <stop offset=".55" stopColor="#ffe3d2" />
          <stop offset=".8" stopColor="#fbdccb" />
          <stop offset="1" stopColor="#b78a7c" />
        </linearGradient>
        <linearGradient id="vessel" x2="0" y2="1">
          <stop offset="0" stopColor="#d8aa9a" />
          <stop offset=".25" stopColor="#fbdfce" />
          <stop offset=".55" stopColor="#ffe6d6" />
          <stop offset="1" stopColor="#6b4c45" />
        </linearGradient>
      </defs>

      <g transform="translate(1080 250) scale(.33333)" fill="none">
        <path d="M98 1840V100q2 -12 16 -12h28q14 0 16 12V1840z" fill="url(#column)" />
        <path d="M104 432q24 -18 50 0" stroke="#d99a8a" strokeWidth="4" />
        <path d="M77 400V70h50v14" stroke="#d8bd10" strokeWidth="4" />
        <path d="M128 400H84q-11 2 -11 16V1840" stroke="#f7dc18" strokeWidth="9" />
        <path d="M126 505V1840" stroke="#8c7428" strokeWidth="5" />
        <path d="M126 505V850" stroke="#b89a20" strokeWidth="3" />
        <path d="M69 232v32M67 232h66" stroke="#585858" strokeWidth="4" />
        <path d="M67 264h66" stroke="#a8a8a8" strokeWidth="5" />
        <path d="M98 222v20" stroke="#c8a89c" strokeWidth="6" />
        <path d="M126 235v165M145 230v145" stroke="#55e4f4" strokeWidth="5" />
        <path d="M124 254h32M124 265h32M124 274h32M124 337h32M124 355h32" stroke="#26cfe8" strokeWidth="3" />
        <path d="M133 213v200M127 400v14" stroke="#f5d11b" strokeWidth="5" />
        <path d="M120 418h16" stroke="#362018" strokeWidth="7" />
        {[415, 785, 1152, 1528].map((y) => (
          <g key={y}>
            <path d={`M134 ${y}h58`} stroke="#666" strokeWidth="4" />
            <path d={`M154 ${y + 32}h38`} stroke="#dedede" strokeWidth="7" />
            <path d={`M158 ${y - 8}v20`} stroke="#f3c9b8" strokeWidth="8" />
            <path d={`M158 ${y + 157}q-12 10 0 20`} fill="#000" />
          </g>
        ))}
        {[599, 965, 1335].map((y) => (
          <g key={y}>
            <path d={`M76 ${y}h22M76 ${y + 32}h25`} stroke="#777" strokeWidth="5" />
            <path d={`M98 ${y - 10}v18`} stroke="#f3d3c6" strokeWidth="8" />
          </g>
        ))}
      </g>

      <g transform="translate(840 690) scale(.33333)" fill="none">
        <g stroke="#a55c22" strokeWidth="4">
          <path d="M96 80v32M148 80v28M105 104h40M170 86h38M226 100h38M290 82h42M346 97h38M415 110V78h38M466 93h56M510 82h54v26M520 90h40M565 94h65M604 78h75M565 70v38" />
          <path d="M93 295h305M98 303h60M190 278h75M200 290h180M465 280h46v26M555 300h82M620 278h72M660 285h32" />
        </g>
        <path d="M198 345v170M292 320v196M421 316v80M433 316v96M452 328v188" stroke="#b59a12" strokeWidth="4" />
        <path d="M645 328v188M652 328v188" stroke="#9c7a10" strokeWidth="4" />
        <path d="M580 326v192" stroke="#f3d712" strokeWidth="9" />
        <path d="M411 392q0 -9 10 -9q10 0 10 9M421 380v12M231 462v22" stroke="#e6cf10" strokeWidth="4" />

        <path d="M305 262q2 -20 20 -20h118q16 0 18 20z" fill="#e9bfae" />
        <path d="M258 272q0 -14 20 -12h170q16 0 16 14q0 18 -22 20H282q-24 -2 -24 -22z" fill="url(#vessel)" />
        <path d="M320 272v42M409 272v42" stroke="#fbe3d6" strokeWidth="9" />
        <path d="M266 232v28M334 215v45M407 220v36M334 285q2 22 -10 22H266V288M455 288v20M424 288v24M434 290v24" stroke="#d8c010" strokeWidth="4" />

        <path d="M388 414q0 -14 20 -14h8q18 0 18 14z" fill="#f0c8b8" />
        <path d="M248 440q0 -26 26 -26h176q24 0 24 26v40q0 26 -24 26H274q-26 0 -26 -26z" fill="url(#vessel)" />
        <path d="M216 490q0 -14 14 -14h10l8 -6v42l-8 -6h-10q-14 -2 -14 -16z" fill="#c9a395" />
        <path d="M277 497v22M444 495v26M622 502v16M600 514h34" stroke="#fbe3d6" strokeWidth="11" />

        <g stroke="#b96c26" strokeWidth="4" strokeDasharray="5 6">
          {up.map((d) => (
            <path key={d} d={`M150 ${312 - d}L255 ${250 - d}L390 ${182 - d}L520 ${112 - d * 0.7}`} strokeDashoffset={d} />
          ))}
          {up.map((d) => (
            <path key={-d - 1} d={`M${150 + d} ${315 - d * 0.2}L${255 + d} ${378 - d * 0.5}L${390 + d * 0.9} ${445 - d * 0.4}L508 ${510 - d * 0.6}`} strokeDashoffset={d} />
          ))}
        </g>
        <path d="M144 270v50M197 240v46M250 208v44M275 205v42M328 174v42M381 140v46M407 138v42M460 100v48M512 82v38M197 310v45M250 340v42M275 345v42M328 376v38M381 405v45M407 410v44M460 440v42M512 474v40M383 145h20M383 155h20M255 355h18" stroke="#a8642a" strokeWidth="4" />
        <path d="M266 308h38M452 310h245q10 0 10 12V514h74v-60h12" stroke="#f3d712" strokeWidth="7" />
        <path d="M782 514V454h14M708 514h100" stroke="#d8c010" strokeWidth="5" />

        <path d="M96 110V522M496 116V520M696 112V522" stroke="#35e3fa" strokeWidth="11" />
        <path d="M296 116V520" stroke="#35cfe4" strokeWidth="7" />
        <path d="M90 116H701M90 320H700" stroke="#35e3fa" strokeWidth="9" />
        <path d="M122 116H696M90 315H700" stroke="#dce7ea" strokeWidth="4" />
        <path d="M75 326h625" stroke="#e8cf14" strokeWidth="3" />
        <path d="M122 515H472M708 514H920M590 516h40" stroke="#f3d712" strokeWidth="7" />
        <path d="M150 300L172 298L255 252h18L390 184l18 -3L525 117M144 316L250 384h22L384 452h22L512 518h18" stroke="#e2e2e2" strokeWidth="5" />
        <path d="M90 522H905" stroke="#e9e9e9" strokeWidth="4" />
        <path d="M845 505h28l12 14h-48z" fill="#ffe0d0" />
      </g>
    </svg>
  );
};

/* Taskbar pictures, drawn on a 32 unit box */
const taskArt: Record<string, React.ReactNode> = {
  Edge: (
    <g>
      <circle cx="16" cy="16" r="15" fill="#1b7fd0" />
      <path d="M1 14C3 -2 29 -4 31 14c0 6 -6 8 -11 6c3 -4 0 -9 -5 -9c-6 0 -11 4 -14 3z" fill="#35b9cf" />
      <path d="M18 1.500c9 1 14 8 13 13c-1 5 -7 6 -11 5c3 -4 0 -8 -2 -9z" fill="#63d45a" opacity=".8" />
      <path d="M12 14c-5 8 2 18 15 13c-7 7 -24 5 -26 -8c0 -5 6 -8 11 -5z" fill="#1a6fc4" />
      <path d="M13 14c-4 7 1 16 15 12c-5 4 -10 5 -14 4c-8 -3 -8 -12 -1 -16z" fill="#0f4a94" />
      <path d="M16 13c-4 4 -2 10 6 10c4 0 7 -1 8 -2l-2 -2c-4 1 -9 0 -7 -3c1 -3 -2 -6 -5 -3z" fill="#d6ebf2" />
    </g>
  ),
  Files: (
    <g>
      <path d="M2 4h11l3 3h14v20H2z" fill="#fccd55" />
      <path d="M2 4h11l2 4H2z" fill="#d59a18" />
      <path d="M8 28V16h17v12h-5v-6h-7v6z" fill="#3a96dc" />
    </g>
  ),
  Music: (
    <g>
      <circle cx="16" cy="16" r="15" fill="#fedb00" />
      <path d="M11 5l13 -4c-1 4 -6 5 -6 7l3 13a5.500 6.500 0 1 1 -4 -5z" fill="#17c06a" />
      <path d="M11 5l13 -4c-1 4 -6 5 -6 7z" fill="#22c8b8" />
    </g>
  ),
  Word: (
    <g>
      <path d="M8 2h23v7H8z" fill="#41a5ee" />
      <path d="M8 9h23v7H8z" fill="#2b7cd3" />
      <path d="M8 16h23v7H8z" fill="#185abd" />
      <path d="M8 23h23v7H8z" fill="#103f91" />
      <rect x="1" y="8" width="16" height="16" rx="1" fill="#185abd" />
      <text x="9" y="20.500" fontSize="12" fontWeight="700" textAnchor="middle" fill="#fff">W</text>
    </g>
  ),
  Excel: (
    <g>
      <path d="M8 2h12v14H8z" fill="#21a366" />
      <path d="M20 2h11v7H20z" fill="#33c481" />
      <path d="M20 9h11v7H20z" fill="#21a366" />
      <path d="M8 16h12v7H8z" fill="#107c41" />
      <path d="M20 16h11v7H20z" fill="#107c41" />
      <path d="M8 23h23v7H8z" fill="#185c37" />
      <rect x="1" y="8" width="16" height="16" rx="1" fill="#107c41" />
      <text x="9" y="20.500" fontSize="13" fontWeight="700" textAnchor="middle" fill="#fff">X</text>
    </g>
  ),
  Chat: (
    <g>
      <circle cx="16" cy="16" r="15" fill="#dcdce2" />
      <path d="M10 11C8 3 18 0 24 4c7 4 8 13 4 20c-3 3 -6 1 -8 -3l-2 -8z" fill="#2f3140" />
      <path d="M10 10l6 1c2 0 3 2 3 5l1 6l-4 1l1 4l-4 3l-2 -5l-2 -1l1 -3l-2 -1l2 -4z" fill="#b99a90" />
      <path d="M18 22l6 2l-2 6q-5 2 -9 0z" fill="#c9ced8" />
      <path d="M24 7l5 3M26 11l4 2" stroke="#c77a95" strokeWidth="2" />
    </g>
  ),
  Console: (
    <g>
      <rect x="2" y="5" width="28" height="22" fill="#000" stroke="#8a8f94" strokeWidth="1.500" />
      <path d="M2 7h28" stroke="#c9cdd1" strokeWidth="2" />
      <path d="M3 25c2 -10 12 -14 26 -15V8H3z" fill="#2e2e2e" />
      <path d="M8 10H5v3h3M10 10v.5M10 13v.5M12 10l2 4M15 13.500h5" stroke="#fff" fill="none" />
    </g>
  ),
  Pdms: (
    <g>
      <rect x="2" y="2" width="28" height="28" fill="#f3f9fc" stroke="#4a7f9c" strokeWidth="2" />
      <path d="M8 24L16 7h2l6 17M17 8l5 16M4.500 18.500c7 -2 12 -1 21 1" fill="none" stroke="#2f86b4" strokeWidth="2.800" />
    </g>
  ),
  Vessel: (
    <g>
      <path d="M14 1h5v2h-5zM14 29h5v2h-5z" fill="#f01010" />
      <path d="M11 6q2 -4 5.500 -4t5.500 4v20q-2 4 -5.500 4T11 26z" fill="#087c08" />
      <path d="M9 11h15M22 14h2v2M11 24H8v-2" stroke="#f01010" strokeWidth="1.800" fill="none" />
    </g>
  ),
  Pid: (
    <g>
      <rect x="1" y="1" width="30" height="30" fill="#b87a2c" />
      <path d="M1 21C9 12 20 7 31 6V1H1z" fill="#d89a44" />
      <path d="M3 15C3 7 7 2 12 2s8 4 8 8M7 13c0 -5 2 -9 5 -11M12 2v8M3 9h15" stroke="#2a1a08" fill="none" strokeWidth="1.600" />
      <text x="16" y="29" fontSize="12" fontWeight="700" textAnchor="middle" fill="#201204">P&amp;ID</text>
    </g>
  ),
};

const tasks: [string, "open" | "multi" | "current" | "alert"][] = [
  ["Edge", "open"], ["Files", "multi"], ["Music", "open"], ["Word", "multi"], ["Excel", "multi"],
  ["Chat", "alert"], ["Console", "open"], ["Pdms", "current"], ["Vessel", "open"], ["Pid", "open"],
];

const TaskbarView = () => (
  <Taskbar>
    <StartArea>
      <button aria-label="Start">
        <Svg $size={20} viewBox="0 0 20 20" fill="#000">
          <path d="M0 3l8 -1v7.500H0zM9 2l11 -2v9.500H9zM0 10.500h8V18l-8 -1zM9 10.500h11V20l-11 -2z" />
        </Svg>
      </button>
      <button aria-label="Search">
        <Svg $size={20} viewBox="0 0 20 20" fill="none">
          <circle cx="10" cy="10" r="8.500" stroke="#000" strokeWidth="2.200" />
        </Svg>
      </button>
      <button aria-label="Task view">
        <Svg $size={20} viewBox="0 0 20 20" fill="none" stroke="#000" strokeWidth="1.200">
          <path d="M.5 5.500h12v9H.5zM.5 0v3h12V0M.5 20v-3h12v3M18 0v3M18 12v8" />
          <path d="M16.500 5.500h3v4h-3z" fill="#000" stroke="none" />
        </Svg>
      </button>
    </StartArea>
    {tasks.map(([name, state]) => (
      <Task key={name} $state={state} aria-label={name}>
        <Svg $size={32} viewBox="0 0 32 32" fontFamily="Open Sans, sans-serif">
          {taskArt[name]}
        </Svg>
      </Task>
    ))}
    <Tray>
      <Battery>
        <Plug viewBox="0 0 15 24" fill="#fff" stroke="#8a9098" aria-hidden="true">
          <path d="M3.500 1h2v6h4V1h2v6h2.500v5q0 4 -4.500 5v6h-4v-6q-4.500 -1 -4.500 -5V7h2.500z" />
        </Plug>
        <Charge>98%</Charge>
        <Terminal />
      </Battery>
      <TrayButton $w={30} aria-label="Show hidden icons">
        <Svg $size={18} viewBox="0 0 18 18" fill="none">
          <path d="M1.500 12.500L9 5l7.500 7.500" stroke="#111" strokeWidth="1.600" />
        </Svg>
      </TrayButton>
      <TrayButton $w={30} aria-label="Sound booster">
        <Svg $size={20} viewBox="0 0 20 20" fill="none" stroke="#fff" strokeWidth="1.400">
          <circle cx="10" cy="10" r="10" fill="#ff9f52" stroke="none" />
          <path d="M3.500 8h2.500l4 -3v10l-4 -3H3.500zM12 7.500q2 2.500 0 5M14.500 5.500q3.500 4.500 0 9" />
        </Svg>
      </TrayButton>
      <TrayButton $w={30} aria-label="Power">
        <Svg $size={20} viewBox="0 0 20 20" fill="none" stroke="#000" strokeWidth="1.200">
          <path d="M6 6.500h12.500v8H4V10M1 4h5v3L4.500 8.500h-2L1 7zM2.300 2v2M4.700 2v2M3.500 8.500V12" />
          <path d="M7 8.500h9.500v4H6z" fill="#000" />
          <path d="M19.500 9v3" />
        </Svg>
      </TrayButton>
      <TrayButton $w={30} aria-label="Network">
        <Svg $size={20} viewBox="0 0 20 20" fill="none" stroke="#222" strokeWidth="1.500">
          <path d="M2 17C3 9 9 3 17 3M6 17.500C7 11 11 7.500 17 7M10.500 17.500C11 14 13.500 12 17 11.500" />
          <circle cx="16" cy="16.500" r="1.500" fill="#222" stroke="none" />
        </Svg>
      </TrayButton>
      <TrayButton $w={28} aria-label="Volume">
        <Svg $size={20} viewBox="0 0 20 20" fill="none" stroke="#111" strokeWidth="1.400">
          <path d="M1 7h3l4 -4v14l-4 -4H1zM11 8.500q1 1.500 0 3" />
          <path d="M13 6.500q2.500 3.500 0 7M16 4q4 6 0 12" stroke="#8f949e" />
        </Svg>
      </TrayButton>
      <TrayButton $w={30}>英</TrayButton>
      <Clock>
        22:21
        <br />
        2021/8/5
      </Clock>
      <Notice aria-label="Notifications">
        <Svg $size={22} viewBox="0 0 22 22">
          <path d="M1 2h20v14h-8l-4 4v-4H1z" fill="#000" />
          <path d="M5 6h12M5 9h12M5 12h12" stroke="#d6dbe8" strokeWidth="1.300" />
        </Svg>
        <span>1</span>
      </Notice>
      <ShowDesktop aria-label="Show desktop" />
    </Tray>
  </Taskbar>
);

export default function App() {
  return (
    <Shell>
      <GlobalStyle />
      <TitleBar>
        <Icon name="logo" size={20} />
        <h1>{"Design - Pipework Application -  AVEVA PDMS (Project - Sample) - [3D View (1)]"}</h1>
        <ButtonSet>
          <WindowButton aria-label="Minimize"><Icon name="winMin" /></WindowButton>
          <WindowButton aria-label="Restore"><Icon name="winRestore" /></WindowButton>
          <WindowButton aria-label="Close"><Icon name="winClose" /></WindowButton>
        </ButtonSet>
      </TitleBar>

      <MenuBar>
        <Grip />
        <Icon name="logo" size={20} />
        {menus.map((m) => (
          <MenuItem key={m} disabled={m.startsWith("Schematic")}>
            {m}
          </MenuItem>
        ))}
        <Fill />
        <MdiButton aria-label="Minimize view"><Icon name="mdiMin" size={22} /></MdiButton>
        <MdiButton aria-label="Restore view"><Icon name="mdiRestore" size={22} /></MdiButton>
        <MdiButton aria-label="Close view"><Icon name="mdiClose" size={22} /></MdiButton>
      </MenuBar>

      <Bars>
        <BarRow>
          <BarGroup>
            <Grip />
            <AutoButton>Auto</AutoButton>
            <ToolButton aria-label="Colour" $w={24}><Icon name="square" size={22} /></ToolButton>
            <DropMark aria-label="Colour list" />
            <SelectWrap $w={63} $arrow="#a3a398" $off>
              <select aria-label="Representation" disabled><option>Soli</option></select>
            </SelectWrap>
            <ToolButton aria-label="Cylinder"><Icon name="cylinder" size={22} /></ToolButton>
          </BarGroup>
          <BarGroup>
            <Grip />
            <CeLabel htmlFor="ce">CE</CeLabel>
            <ElementBox $w={211} $h={26} $bg="#fff" $line="#6d7684" $size={14}>
              <select id="ce"><option>factory1</option></select>
              <Icon name="chevThin" size={12} />
            </ElementBox>
            <ToolButton aria-label="Back"><Icon name="left" /></ToolButton>
            <DropMark aria-label="Back list" $color="#1f4fa8" />
            <ToolButton aria-label="Forward"><Icon name="right" /></ToolButton>
            <DropMark aria-label="Forward list" $w={11} />
          </BarGroup>
          <BarGroup>
            <Grip />
            <SelectWrap $w={141}>
              <select aria-label="Settings scope"><option>Local Settings</option></select>
            </SelectWrap>
            <SelectWrap $w={139}>
              <select aria-label="Search text"><option> </option></select>
            </SelectWrap>
            <Tools names={["binoc", "greyX"]} />
          </BarGroup>
          <BarGroup>
            <Grip />
            <Tools names={["copyDocs", "save", "winPlus", "winMinus", "winDash", "listWin"]} />
            <SelectWrap $w={182}>
              <select aria-label="List"><option>No list</option></select>
            </SelectWrap>
            <Tools names={["redX"]} />
          </BarGroup>
        </BarRow>
        <BarRow>
          <BarGroup><Grip /><Tools names={["sun", "undo", "redo"]} /></BarGroup>
          <BarGroup><Grip /><Tools names={["pointer", "frameBox", "sector", "addPick", "axesBox", "iCircle"]} /></BarGroup>
        </BarRow>
        <BarRow>
          <BarGroup><Grip /><Tools names={["dashWheel"]} /></BarGroup>
          <BarGroup>
            <Grip />
            <Tools
              names={["redDome", "searchTable", "triLeft", "triRight", "rename", "blocks", "thinX", "listGrey", "cut", "beam", "bolt", "calendar", "undoGrey", "redo"]}
            />
          </BarGroup>
          <BarGroup>
            <Grip />
            <Tools names={["specDoc"]} />
            <SpecInput aria-label="Specification" defaultValue="A150" />
            <Tools names={["pipeNew", "pipeCycle", "valveNew", "valveCycle", "valveX", "dotDown", "dotUp", "level"]} />
          </BarGroup>
        </BarRow>
        <BarRow>
          <BarGroup><Grip /><Tools names={["pBend", "redDart", "trim"]} /></BarGroup>
          <BarGroup><Grip /><Tools names={["flange", "flangeNew", "flangeCycle", "flangeDoc"]} /></BarGroup>
        </BarRow>
      </Bars>

      <Main>
        <Explorer>
          <ExplorerHead>
            <Grip />
            <h2>DesignExplorer</h2>
            <HeadButton aria-label="Pin"><Icon name="pin" size={18} /></HeadButton>
            <HeadButton aria-label="Close"><Icon name="boldX" size={18} /></HeadButton>
          </ExplorerHead>
          <FilterRow>
            <label htmlFor="filter">Filter</label>
            <input id="filter" type="checkbox" />
            <ElementBox $w={143} $h={25} $bg="#dfdfdf" $line="#adadad" $size={13}>
              <select aria-label="Filter type"><option>Equipment</option></select>
              <Icon name="chevThin" size={12} />
            </ElementBox>
          </FilterRow>
          <TreeArea>
            <Tree role="tree">
              {nodes.map((n, i) => (
                <TreeRow key={i} node={n} />
              ))}
            </Tree>
            <ScrollV>
              <ScrollButton aria-label="Scroll up"><Icon name="chevUp" size={18} /></ScrollButton>
              <ThumbV />
              <ScrollButton aria-label="Scroll down"><Icon name="chevDown" size={18} /></ScrollButton>
            </ScrollV>
          </TreeArea>
          <ScrollH>
            <ScrollButton aria-label="Scroll left"><Icon name="chevLeft" size={18} /></ScrollButton>
            <ThumbH />
            <ScrollButton aria-label="Scroll right"><Icon name="chevRight" size={18} /></ScrollButton>
          </ScrollH>
        </Explorer>
        <Splitter />
        <View>
          <Navigate>Navigate :</Navigate>
          <ViewBody>
            <ViewTools>
              {viewTools.map((t) => (
                <ViewTool key={t} aria-label={t} $on={t === "move"} $gap={gapAfter[t] ?? 5}>
                  <Icon name={t} size={20} />
                </ViewTool>
              ))}
            </ViewTools>
            <Canvas>
              <Model />
            </Canvas>
          </ViewBody>
          <ViewStatus>
            <span>e</span>
            <span>Parallel</span>
            <span>Model</span>
            <span>Pan</span>
          </ViewStatus>
        </View>
      </Main>
      <StatusBar />
      <TaskbarView />
      <EdgeMarker />
    </Shell>
  );
}
